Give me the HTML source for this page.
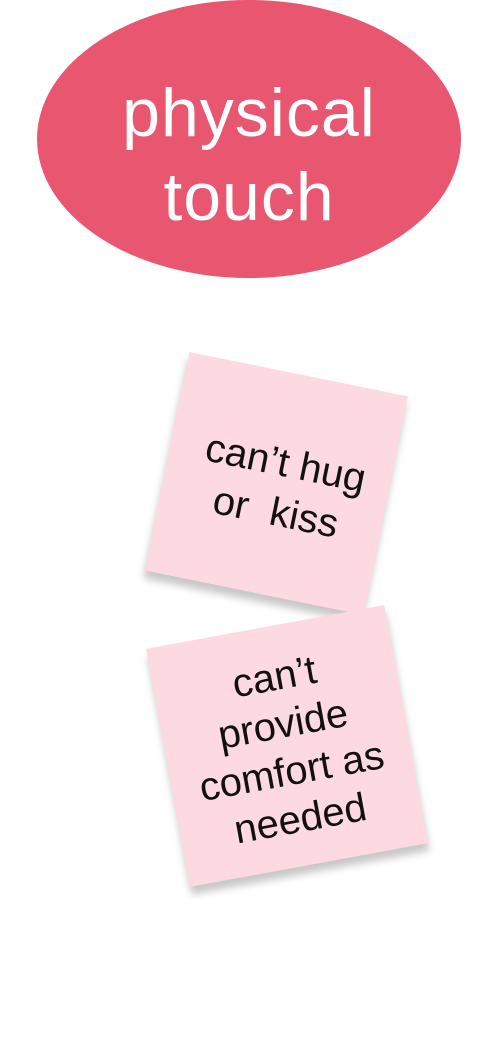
<!DOCTYPE html>
<html><head><style>
html,body{margin:0;padding:0;background:#fff;width:500px;height:1052px;overflow:hidden;position:relative;font-family:"Liberation Sans",sans-serif;}
.ell{position:absolute;left:37px;top:0;width:424px;height:278px;border-radius:50%;background:#e9566f;}
.ell div{position:absolute;left:0;width:100%;text-align:center;color:#fff;font-size:68px;letter-spacing:1px;}
.note{position:absolute;background:#fdd9e1;box-shadow:0 8px 8px rgba(0,0,0,0.22);display:flex;align-items:center;justify-content:center;text-align:center;color:#111;line-height:1.2;white-space:nowrap;}
</style></head><body>
<div class="ell"><div style="top:74px">physical</div><div style="top:158px">touch</div></div>
<div class="note" style="left:165px;top:372px;width:223px;height:223px;transform:rotate(11.5deg);font-size:40px;line-height:1.25"><div style="margin-left:10px;margin-top:6px">can’t hug<br>or&nbsp; kiss</div></div>
<div class="note" style="left:166px;top:625px;width:242px;height:242px;transform:rotate(-10.4deg);line-height:1.2;font-size:40px"><div style="margin-top:4px">can’t<br>provide<br>comfort as<br>needed</div></div>
</body></html>
